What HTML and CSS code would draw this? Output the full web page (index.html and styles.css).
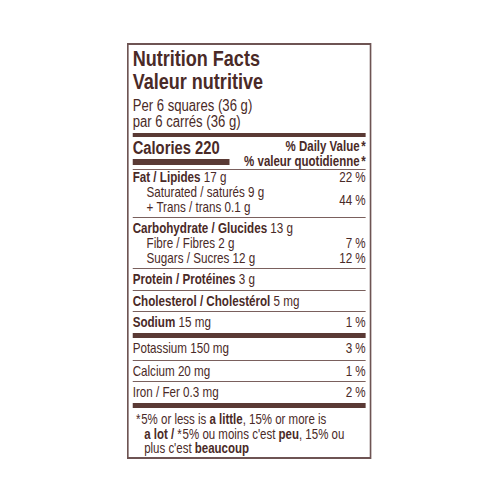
FILE: index.html
```html
<!DOCTYPE html>
<html>
<head>
<meta charset="utf-8">
<link rel="stylesheet" href="styles.css">
</head>
<body>
<div class="label">
  <div class="title">Nutrition Facts</div>
  <div class="title">Valeur nutritive</div>
  <div class="serving">
    <div>Per 6 squares (36 g)</div>
    <div>par 6 carrés (36 g)</div>
  </div>
  <div class="rule-thick"></div>
  <div class="cal-block">
    <div class="cal-left">
      <div class="calories">Calories 220</div>
      <div class="cal-bar"></div>
    </div>
    <div class="dv-head">
      <div>% Daily Value<span class="ast">*</span></div>
      <div>% valeur quotidienne<span class="ast">*</span></div>
    </div>
  </div>
  <div class="section fat">
    <div class="row"><span><b>Fat / Lipides</b> 17 g</span><span>22 %</span></div>
    <div class="sub-group">
      <div class="sub-lines">
        <div class="indent">Saturated / saturés 9 g</div>
        <div class="indent">+ Trans / trans 0.1 g</div>
      </div>
      <span class="pct">44 %</span>
    </div>
  </div>
  <div class="section carb">
    <div class="row"><span><b>Carbohydrate / Glucides</b> 13 g</span></div>
    <div class="row indent"><span>Fibre / Fibres 2 g</span><span>7 %</span></div>
    <div class="row indent"><span>Sugars / Sucres 12 g</span><span>12 %</span></div>
  </div>
  <div class="section protein">
    <div class="row"><span><b>Protein / Protéines</b> 3 g</span></div>
  </div>
  <div class="section chol">
    <div class="row"><span><b>Cholesterol / Cholestérol</b> 5 mg</span></div>
  </div>
  <div class="section sodium">
    <div class="row"><span><b>Sodium</b> 15 mg</span><span>1 %</span></div>
  </div>
  <div class="rule-mid"></div>
  <div class="section potassium">
    <div class="row"><span>Potassium 150 mg</span><span>3 %</span></div>
  </div>
  <div class="section calcium">
    <div class="row"><span>Calcium 20 mg</span><span>1 %</span></div>
  </div>
  <div class="section iron">
    <div class="row"><span>Iron / Fer 0.3 mg</span><span>2 %</span></div>
  </div>
  <div class="rule-mid"></div>
  <p class="foot"><span class="ast2">*</span>5% or less is <b>a little</b>, 15% or more is<br><b>a lot /</b> <span class="ast2">*</span>5% ou moins c'est <b>peu</b>, 15% ou<br>plus c'est <b>beaucoup</b></p>
</div>
</body>
</html>
```

FILE: styles.css
```css
html, body {
  margin: 0;
  padding: 0;
  background: #ffffff;
}

body {
  font-family: "Liberation Sans", Arial, sans-serif;
  color: #4a2a27;
}

/* The label is drawn at a wider size and compressed horizontally,
   so the Arial-width font reads like the condensed face of the original. */
.label {
  box-sizing: border-box;
  width: 297.6px;
  margin: 43px 0 0 127px;
  border: 2px solid #6e5453;
  padding: 2px 4.5px 1px 4.9px;
  transform: scaleX(0.82);
  transform-origin: 0 0;
}

.title {
  font-size: 22px;
  font-weight: bold;
  line-height: 23px;
}

.serving {
  margin-top: 5px;
  font-size: 16px;
  line-height: 16px;
}

.rule-thick {
  height: 4px;
  background: #5a3a35;
  margin-top: 3px;
}

.cal-block {
  display: flex;
  justify-content: space-between;
  padding-top: 2px;
}

.calories {
  font-size: 18px;
  font-weight: bold;
  line-height: 19px;
}

.cal-bar {
  width: 118px;
  height: 6px;
  background: #5a3a35;
  margin-top: 1px;
}

.dv-head {
  text-align: right;
  font-size: 14px;
  font-weight: bold;
  line-height: 15px;
}

.ast {
  padding-left: 2px;
}

.section {
  border-top: 1px solid #7a605d;
  font-size: 14.2px;
  line-height: 15px;
}

.row {
  display: flex;
  justify-content: space-between;
}

.indent {
  padding-left: 17px;
}

.sub-group {
  display: flex;
  justify-content: space-between;
  align-items: center;
}

.fat {
  padding: 0 0 2px;
}

.carb {
  padding: 3px 0 2px;
}

.protein {
  padding: 3px 0 3px;
}

.chol {
  padding: 3px 0 2px;
}

.sodium {
  padding: 3px 0 3px;
}

.rule-mid {
  height: 5px;
  background: #5a3a35;
}

.potassium {
  border-top: none;
  padding: 3px 0 4px;
}

.calcium {
  padding: 3px 0 2px;
}

.iron {
  padding: 3px 0 3px;
}

.foot {
  margin: 4px 0 0;
  font-size: 14px;
  line-height: 14.5px;
  padding-left: 14px;
  text-indent: -10px;
}

.ast2 {
  margin-right: 1px;
}
```
